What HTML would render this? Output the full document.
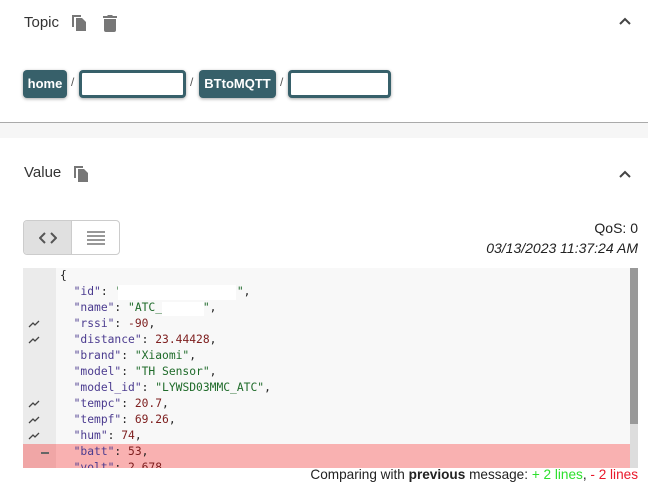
<!DOCTYPE html>
<html><head><style>
*{margin:0;padding:0;box-sizing:border-box}
body{width:648px;height:483px;overflow:hidden;background:#fff;font-family:"Liberation Sans",sans-serif;position:relative;color:#222}
.abs{position:absolute}
.title{font-size:15px;color:#333}
.chip{position:absolute;top:70px;height:28px;background:#37606a;border-radius:4px;color:#fff;font-weight:bold;font-size:13px;line-height:28px;text-align:center;box-shadow:0 1px 3px rgba(0,0,0,.35)}
.inp{position:absolute;top:70px;height:28px;border:3px solid #37606a;border-radius:4px;background:#fff;box-shadow:0 1px 3px rgba(0,0,0,.35)}
.sl{position:absolute;top:75px;font-size:12px;color:#555}
.code{position:absolute;left:23px;top:268px;width:615px;height:200px;background:#f8f8f8;overflow:hidden;font-family:"DejaVu Sans Mono","Liberation Mono",monospace;font-size:11.3px}
.gut{position:absolute;left:0;top:0;width:33px;height:200px;background:#ebebeb}
.ln{position:absolute;left:0;height:16px;line-height:16px;width:607px;white-space:pre}
.ln span.t{position:absolute;left:37px}
.k{color:#4b3b8f}.s{color:#1f6b2a}.n{color:#7d1d1d}
.m{position:absolute;left:5px;top:4px}
</style></head><body>
<div class="abs title" style="left:24px;top:14px">Topic</div>
<svg class="abs" style="left:71px;top:14px" width="16" height="18" viewBox="0 0 16 18"><path d="M1 2h2v11h-2z M1 1h9v2h-9z" fill="#777"/><path d="M5 4h6l4 4v9h-10z" fill="#777"/></svg>
<svg class="abs" style="left:103px;top:14px" width="14" height="18" viewBox="0 0 14 18"><path d="M0 2h4l1-1h4l1 1h4v2h-14z M1 5h12v11a2 2 0 0 1-2 2h-8a2 2 0 0 1-2-2z" fill="#777"/></svg>
<svg class="abs" style="left:619px;top:17px" width="12" height="8" viewBox="0 0 12 8"><path d="M1 7l5-5 5 5" stroke="#444" stroke-width="2" fill="none"/></svg>

<div class="chip" style="left:23px;width:44px">home</div>
<div class="sl" style="left:71px">/</div>
<div class="inp" style="left:79px;width:107px"></div>
<div class="sl" style="left:190px">/</div>
<div class="chip" style="left:199px;width:77px">BTtoMQTT</div>
<div class="sl" style="left:280px">/</div>
<div class="inp" style="left:288px;width:103px"></div>

<div class="abs" style="left:0;top:122px;width:648px;height:1px;background:#aaa"></div>
<div class="abs" style="left:0;top:123px;width:648px;height:15px;background:#f6f6f6"></div>

<div class="abs title" style="left:24px;top:164px">Value</div>
<svg class="abs" style="left:73px;top:165px" width="16" height="18" viewBox="0 0 16 18"><path d="M1 2h2v11h-2z M1 1h9v2h-9z" fill="#777"/><path d="M5 4h6l4 4v9h-10z" fill="#777"/></svg>
<svg class="abs" style="left:619px;top:170px" width="12" height="8" viewBox="0 0 12 8"><path d="M1 7l5-5 5 5" stroke="#444" stroke-width="2" fill="none"/></svg>

<div class="abs" style="left:23px;top:220px;width:97px;height:35px;border:1px solid #ccc;border-radius:4px;overflow:hidden">
<div class="abs" style="left:0;top:0;width:48px;height:35px;background:#e0e0e0;border-right:1px solid #ccc"></div>
<svg class="abs" style="left:15px;top:11px" width="18" height="12" viewBox="0 0 18 12"><path d="M6 1l-5 5 5 5M12 1l5 5-5 5" stroke="#555" stroke-width="2" fill="none"/></svg>
<svg class="abs" style="left:63px;top:10px" width="18" height="14" viewBox="0 0 18 14"><path d="M0 1h18M0 5h18M0 9h18M0 13h18" stroke="#777" stroke-width="1.5"/></svg>
</div>
<div class="abs" style="right:10px;top:220px;font-size:14px;color:#222">QoS: 0</div>
<div class="abs" style="right:10px;top:240px;font-size:14px;font-style:italic;color:#222">03/13/2023 11:37:24 AM</div>

<div class="code">
<div class="gut"></div>
<div class="ln" style="top:0"><span class="t">{</span></div>
<div class="ln" style="top:16px"><span class="t">  <span class="k">"id"</span>: <span class="s">'                 "</span>,</span></div>
<div class="abs" style="left:95px;top:17px;width:118px;height:15px;background:#fff"></div>
<div class="ln" style="top:32px"><span class="t">  <span class="k">"name"</span>: <span class="s">"ATC_      "</span>,</span></div>
<div class="abs" style="left:139px;top:34px;width:42px;height:14px;background:#fff"></div>
<div class="ln" style="top:48px"><svg class="m" width="12" height="8" viewBox="0 0 12 8"><path d="M1 7l4-4 2 2 4-4" stroke="#444" stroke-width="1.3" fill="none"/></svg><span class="t">  <span class="k">"rssi"</span>: <span class="n">-90</span>,</span></div>
<div class="ln" style="top:64px"><svg class="m" width="12" height="8" viewBox="0 0 12 8"><path d="M1 7l4-4 2 2 4-4" stroke="#444" stroke-width="1.3" fill="none"/></svg><span class="t">  <span class="k">"distance"</span>: <span class="n">23.44428</span>,</span></div>
<div class="ln" style="top:80px"><span class="t">  <span class="k">"brand"</span>: <span class="s">"Xiaomi"</span>,</span></div>
<div class="ln" style="top:96px"><span class="t">  <span class="k">"model"</span>: <span class="s">"TH Sensor"</span>,</span></div>
<div class="ln" style="top:112px"><span class="t">  <span class="k">"model_id"</span>: <span class="s">"LYWSD03MMC_ATC"</span>,</span></div>
<div class="ln" style="top:128px"><svg class="m" width="12" height="8" viewBox="0 0 12 8"><path d="M1 7l4-4 2 2 4-4" stroke="#444" stroke-width="1.3" fill="none"/></svg><span class="t">  <span class="k">"tempc"</span>: <span class="n">20.7</span>,</span></div>
<div class="ln" style="top:144px"><svg class="m" width="12" height="8" viewBox="0 0 12 8"><path d="M1 7l4-4 2 2 4-4" stroke="#444" stroke-width="1.3" fill="none"/></svg><span class="t">  <span class="k">"tempf"</span>: <span class="n">69.26</span>,</span></div>
<div class="ln" style="top:160px"><svg class="m" width="12" height="8" viewBox="0 0 12 8"><path d="M1 7l4-4 2 2 4-4" stroke="#444" stroke-width="1.3" fill="none"/></svg><span class="t">  <span class="k">"hum"</span>: <span class="n">74</span>,</span></div>
<div class="ln" style="top:176px;height:24px;background:#f9b1b1"><div class="abs" style="left:0;top:0;width:33px;height:24px;background:#f0a6a6"></div><div class="abs" style="left:18px;top:8px;width:8px;height:2px;background:#666"></div><span class="t">  <span class="k">"batt"</span>: <span class="n">53</span>,</span></div>
<div class="ln" style="top:192px"><span class="t">  <span class="k">"volt"</span>: <span class="n">2.678</span></span></div>
<div class="abs" style="left:607px;top:0;width:8px;height:200px;background:#ddd"></div>
<div class="abs" style="left:607px;top:0;width:8px;height:156px;background:#999"></div>
</div>
<div class="abs" style="right:10px;top:467px;font-size:13.6px;color:#222;white-space:nowrap">Comparing with <b>previous</b> message: <span style="color:#2de02d">+ 2 lines</span>, <span style="color:#e8182a">- 2 lines</span></div>
</body></html>
